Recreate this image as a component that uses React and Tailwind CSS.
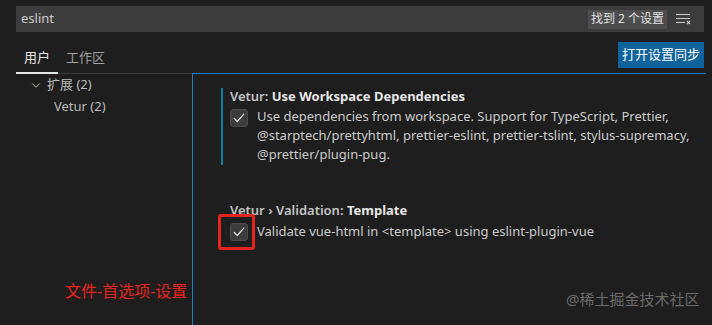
import React from "react";

const FONT = { fontFamily: '"Noto Sans", "Noto Sans CJK SC", sans-serif' };

function Check() {
    return (
        <svg width="14" height="14" viewBox="0 0 16 16" fill="none">
            <path d="M2.5 8.5 L6 12 L13.5 3.5" stroke="#e8e8e8" strokeWidth="1.4" strokeLinecap="round" strokeLinejoin="round"/>
        </svg>
    );
}

function Checkbox() {
    return (
        <div className="w-[18px] h-[18px] rounded-[3px] bg-[#3c3c3c] border border-[#4a4a4a] flex items-center justify-center shrink-0">
            <Check/>
        </div>
    );
}

function ClearFilterIcon() {
    return (
        <svg width="16" height="14" viewBox="0 0 16 14" fill="none" stroke="#c5c5c5" strokeWidth="1.1">
            <path d="M1 2.5 H15"/>
            <path d="M1 6.5 H15"/>
            <path d="M1 10.5 H10"/>
            <path d="M12 9 L15 12 M15 9 L12 12"/>
        </svg>
    );
}

export default function App() {
    return (
        <div className="w-[712px] h-[325px] bg-[#1e1e1e] overflow-hidden flex flex-col text-[#cccccc]" style={FONT}>
            {/* Search */}
            <div className="pl-4 pr-2 pt-[6px]">
                <div className="h-[26px] bg-[#3c3c3c] flex items-center pl-[5px] pr-[13px]">
                    <span className="text-[13px] text-[#cccccc] flex-1">eslint</span>
                    <span className="bg-[#4d4d4d] text-[#e0e0e0] text-[12px] h-[19px] px-[3px] flex items-center mr-[8px]">找到 2 个设置</span>
                    <ClearFilterIcon/>
                </div>
            </div>

            {/* Tabs */}
            <div className="pl-4 pr-2">
                <div className="h-[42px] flex items-end justify-between border-b border-[#3a3a3a]">
                    <div className="flex items-end h-full">
                        <div className="h-full flex items-center px-2 pt-[10px] border-b-2 border-[#e7e7e7] -mb-px text-[13px] text-[#e7e7e7]">用户</div>
                        <div className="h-full flex items-center px-2 pt-[10px] text-[13px] text-[#a0a0a0]">工作区</div>
                    </div>
                    <div className="self-start mt-[10px] h-[26px] px-[4px] bg-[#0e639c] text-white text-[13px] flex items-center">打开设置同步</div>
                </div>
            </div>

            {/* Body */}
            <div className="flex-1 flex pl-4 pr-2">
                <div className="w-[176px] shrink-0 relative">
                    <div className="h-[22px] flex items-center pl-[14px] text-[13px] text-[#bbbbbb]">
                        <svg width="12" height="12" viewBox="0 0 16 16" fill="none" className="mr-[5px]">
                            <path d="M3 6 L8 11 L13 6" stroke="#c5c5c5" strokeWidth="1.3"/>
                        </svg>
                        扩展 (2)
                    </div>
                    <div className="h-[22px] flex items-center pl-[38px] text-[13px] text-[#bbbbbb]">Vetur (2)</div>
                    <div className="absolute left-[49px] top-[205px] text-[16px] text-[#e8221d]">文件-首选项-设置</div>
                </div>

                <div className="flex-1 border-l border-t border-[#1a7fc4] -mt-px relative">
                    <div className="pl-[28px] pt-[14px]">
                        <div className="flex">
                            <div className="w-[2px] bg-[#0c7d9d] shrink-0"/>
                            <div className="pl-[7px] pr-4 pb-px">
                                <div className="text-[13px] leading-[16px] font-semibold">
                                    <span className="text-[#c4c4c4]">Vetur: </span>
                                    <span className="text-[#e7e7e7] font-bold">Use Workspace Dependencies</span>
                                </div>
                                <div className="flex mt-[3px]">
                                    <div className="pt-[2px] pr-[9px]"><Checkbox/></div>
                                    <div className="text-[13px] leading-[19px] text-[#cccccc] whitespace-nowrap">
                                        Use dependencies from workspace. Support for TypeScript, Prettier,<br/>
                                        @starptech/prettyhtml, prettier-eslint, prettier-tslint, stylus-supremacy,<br/>
                                        @prettier/plugin-pug.
                                    </div>
                                </div>
                            </div>
                        </div>

                        <div className="pl-[9px] mt-[37px]">
                            <div className="text-[13px] leading-[16px] font-semibold">
                                <span className="text-[#c4c4c4]">Vetur › Validation: </span>
                                <span className="text-[#e7e7e7] font-bold">Template</span>
                            </div>
                            <div className="flex items-center mt-[4px]">
                                <div className="relative pr-[9px]">
                                    <Checkbox/>
                                    <div className="absolute left-[-12px] top-[-9px] w-[37px] h-[36px] border-[3px] border-[#e5231d] rounded-[3px]"/>
                                </div>
                                <div className="text-[13px] leading-[19px] text-[#cccccc] whitespace-nowrap">
                                    Validate vue-html in &lt;template&gt; using eslint-plugin-vue
                                </div>
                            </div>
                        </div>
                    </div>
                    <div className="absolute right-[6px] bottom-[15px] text-[15px] text-[#6a6a6a]">@稀土掘金技术社区</div>
                </div>
            </div>
        </div>
    );
}
